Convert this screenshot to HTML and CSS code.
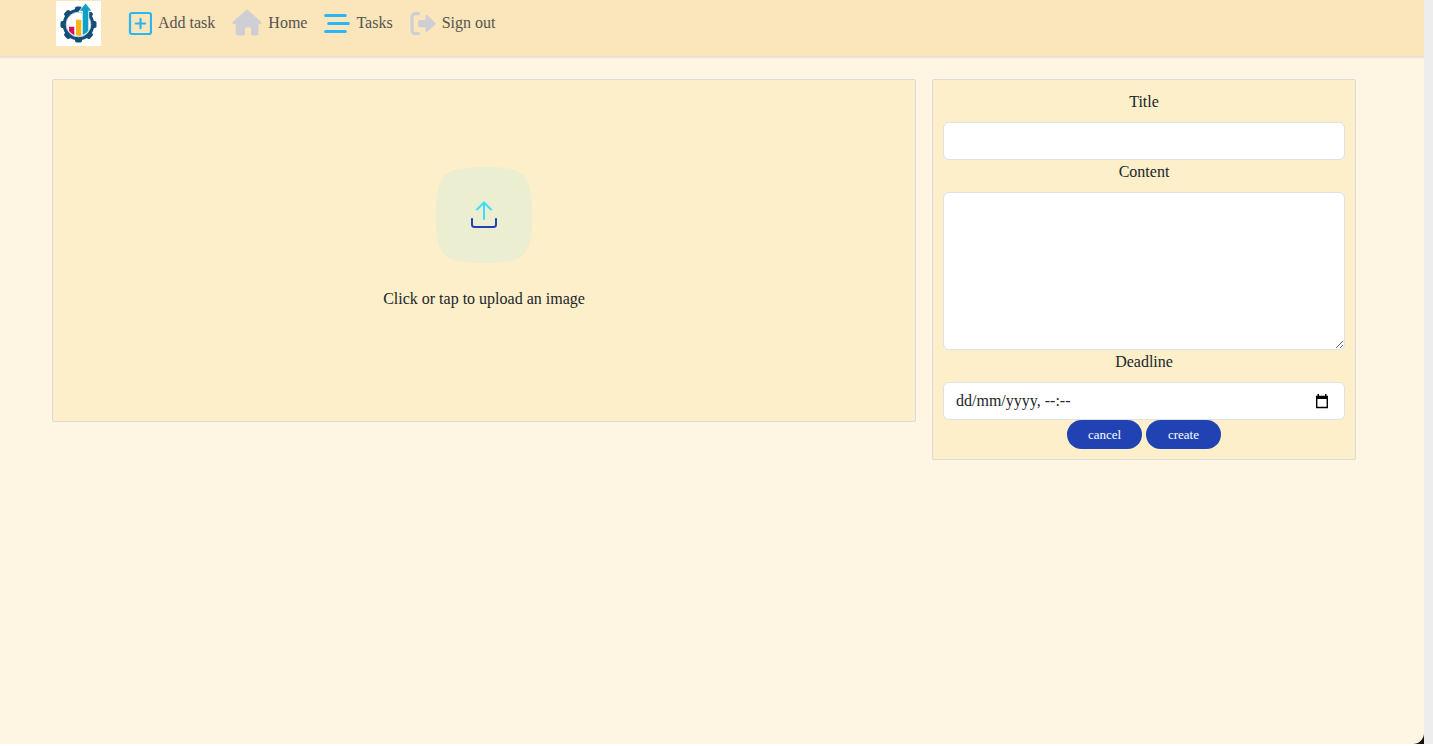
FILE: index.html
```html
<!DOCTYPE html>
<html lang="en-GB">
<head>
<meta charset="utf-8">
<meta name="viewport" content="width=device-width, initial-scale=1">
<title>Add task</title>
<link rel="stylesheet" href="styles.css">
</head>
<body>
<div class="frame">
<div class="page">
  <header class="navbar">
    <a class="brand" href="#" aria-label="Home page">
      <svg viewBox="0 0 45 45" width="45" height="45" aria-hidden="true">
        <g fill="#134f78">
          <rect x="19" y="5.500" width="7" height="36" rx="1.800"/>
          <rect x="19" y="5.500" width="7" height="36" rx="1.800" transform="rotate(45 22.500 23.500)"/>
          <rect x="19" y="5.500" width="7" height="36" rx="1.800" transform="rotate(90 22.500 23.500)"/>
          <rect x="19" y="5.500" width="7" height="36" rx="1.800" transform="rotate(135 22.500 23.500)"/>
          <circle cx="22.500" cy="23.500" r="15.800"/>
        </g>
        <circle cx="22.500" cy="23.500" r="12.300" fill="#fff" stroke="#c9d3dc" stroke-width="1"/>
        <path d="M25.800 22V11h-3.500l7.200-10 7.200 10h-3.500v11z" fill="#fff"/>
        <path d="M13 25.700h5.300v8.600q-3.300-1.400-5.300-4.600z" fill="#d6115f"/>
        <path d="M20 18.700h5.300v16q-2.800.4-5.300-.2z" fill="#fdb515"/>
        <path d="M26.700 34V9.800h-3l5.800-7.300 5.800 7.300h-3v20q-2.300 3.200-5.600 4.200z" fill="#119fc7"/>
      </svg>
    </a>
    <nav class="links">
      <a class="link" href="#">
        <svg class="blue" viewBox="0 0 24 24" width="24" height="24" aria-hidden="true"><rect x="2" y="2" width="21" height="21" rx="2" fill="none" stroke="currentColor" stroke-width="2.200"/><path d="M12.500 7.800v9.400M7.800 12.500h9.400" stroke="currentColor" stroke-width="2.200" stroke-linecap="round"/></svg>
        <span>Add task</span>
      </a>
      <a class="link" href="#">
        <svg class="grey" viewBox="0 0 30 28" width="30" height="28" aria-hidden="true"><path d="M14 1.200a1.500 1.500 0 0 1 2 0L28.800 12.500c1.200 1 .6 2.700-.8 2.700h-1.500V24a2.500 2.500 0 0 1-2.500 2.500h-3.500a1.500 1.500 0 0 1-1.500-1.500v-5a1.500 1.500 0 0 0-1.500-1.500h-3a1.500 1.500 0 0 0-1.500 1.500v5a1.500 1.500 0 0 1-1.500 1.500H6.200A2.500 2.500 0 0 1 3.700 24v-8.800H2c-1.400 0-2-1.700-.8-2.700z" fill="currentColor"/></svg>
        <span>Home</span>
      </a>
      <a class="link" href="#">
        <svg class="blue" viewBox="0 0 26 24" width="26" height="24" aria-hidden="true"><path d="M1.700 4.500h19.500M4.800 12.500h19.500M1.700 20.500h19.500" stroke="currentColor" stroke-width="3.200" stroke-linecap="round"/></svg>
        <span>Tasks</span>
      </a>
      <a class="link" href="#">
        <svg class="grey" viewBox="0 0 26 24" width="26" height="24" aria-hidden="true"><path d="M8.500 2.700H5.500A3.500 3.500 0 0 0 2 6.200v13a3.500 3.500 0 0 0 3.500 3.500h3" fill="none" stroke="currentColor" stroke-width="3.200" stroke-linecap="round"/><path d="M15.500 5.500c0-1.400 1.300-1.800 2.200-.9l7.600 7.100a1.200 1.200 0 0 1 0 1.800l-7.600 7.100c-.9.900-2.200.4-2.200-.9v-3.500H10A1.800 1.800 0 0 1 8.200 14.400v-3.500A1.800 1.800 0 0 1 10 9.100h5.500z" fill="currentColor"/></svg>
        <span>Sign out</span>
      </a>
    </nav>
  </header>
  <main>
    <form class="task">
      <section class="panel upload">
        <label class="drop" for="image">
          <span class="tile">
            <svg viewBox="0 0 96 96" width="96" height="96" aria-hidden="true"><path d="M0 48C0 7 7 0 48 0s48 7 48 48-7 48-48 48S0 89 0 48z" fill="#ebeed0"/><path d="M48 52V36M41 42.500l7-7 7 7" fill="none" stroke="#3ddcff" stroke-width="2" stroke-linecap="round" stroke-linejoin="round"/><path d="M36 52v5.500a2.500 2.500 0 0 0 2.500 2.500h19a2.500 2.500 0 0 0 2.500-2.500V52" fill="none" stroke="#2142b2" stroke-width="2" stroke-linecap="round"/></svg>
          </span>
          <span>Click or tap to upload an image</span>
        </label>
        <input class="file" id="image" type="file" accept="image/*">
      </section>
      <section class="panel fields">
        <label for="title">Title</label>
        <input class="control" id="title" type="text">
        <label for="content">Content</label>
        <textarea class="control" id="content" rows="6"></textarea>
        <label for="deadline">Deadline</label>
        <div class="control date">
          <input id="deadline" type="text" value="dd/mm/yyyy, --:--">
          <button class="picker" type="button" aria-label="Choose date">
            <svg viewBox="0 0 14 15" width="14" height="15" aria-hidden="true"><path d="M1.700 2.500h10.600v11H1.700z" fill="none" stroke="#000" stroke-width="1.400"/><path d="M1 2h12v3H1zM2.500 0H4v3H2.500zM10 0h1.500v3H10z"/></svg>
          </button>
        </div>
        <div class="actions">
          <button class="pill" type="button">cancel</button>
          <button class="pill" type="submit">create</button>
        </div>
      </section>
    </form>
  </main>
</div>
</div>
</body>
</html>
```
FILE: styles.css
```css
* { box-sizing: border-box; }
body {
  margin: 0;
  background: #fff;
  color: #212529;
  font-family: "Liberation Serif", "Times New Roman", serif;
  font-size: 16px;
  line-height: 24px;
}
input, textarea, button { font: inherit; color: inherit; }
.frame {
  min-height: calc(100vh - 2px);
  display: flex;
  padding-right: 9px;
  background: linear-gradient(to left, #ededed 9px, #1a1208 9px);
}
.page {
  flex: 1;
  background: #fef5e2;
  border-bottom-right-radius: 11px;
}
.navbar {
  display: flex;
  align-items: flex-start;
  gap: 27px;
  padding: 1px 56px 10px;
  border-bottom: 1px solid #e6dfd8;
  box-shadow: 0 1px 1px #eee4d8;
  background: #fbe5ba;
}
.brand {
  display: flex;
  background: #fff;
}
.links {
  display: flex;
  gap: 17px;
  height: 44px;
  align-items: center;
}
.link {
  display: flex;
  align-items: center;
  gap: 6px;
  color: #555450;
  text-decoration: none;
}
.blue { color: #29b6f6; }
.grey { color: #cfced4; }
.task {
  display: grid;
  grid-template-columns: 864fr 424fr;
  gap: 16px;
  align-items: start;
  padding: 22px 68px 22px 52px;
}
.panel {
  border: 1px solid #dadbdd;
  border-radius: 2px;
  background: #fcefca;
  text-align: center;
}
.upload { padding: 87px 16px 110px; }
.drop {
  display: flex;
  flex-direction: column;
  align-items: center;
  gap: 24px;
  cursor: pointer;
}
.tile { display: flex; }
.file { display: none; }
.fields {
  display: flex;
  flex-direction: column;
  padding: 10px;
}
.fields label { padding-bottom: 8px; }
.control {
  width: 100%;
  height: 38px;
  padding: 6px 12px;
  border: 1px solid #dee2e6;
  border-radius: 6px;
  background: #fff;
}
textarea.control { height: 158px; resize: vertical; }
.date {
  display: flex;
  align-items: center;
  padding-right: 15px;
}
.date input {
  flex: 1;
  min-width: 0;
  padding: 0;
  border: 0;
  background: none;
}
.picker {
  display: flex;
  padding: 0;
  border: 0;
  background: none;
}
.actions {
  display: flex;
  justify-content: center;
  gap: 4px;
}
.pill {
  width: 75px;
  height: 29px;
  padding: 0;
  border: 0;
  border-radius: 16px;
  background: #2142b2;
  color: #fff;
  font-size: 13px;
}
```
